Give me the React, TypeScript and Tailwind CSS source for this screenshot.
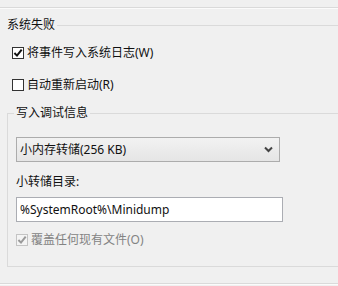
import React from 'react';

const font = { fontFamily: '"Noto Sans", "Noto Sans CJK SC", sans-serif' };

function CheckBox({ checked, disabled }: { checked?: boolean; disabled?: boolean }) {
    return (
        <span
            className={`flex h-[12px] w-[12px] shrink-0 items-center justify-center border ${
                disabled ? 'border-[#c4c4c4] bg-[#f4f4f4]' : 'border-[#333333] bg-white'
            }`}
        >
            {checked && (
                <svg width="10" height="10" viewBox="0 0 10 10">
                    <path
                        d="M1.4 5 L4 7.6 L8.7 1.6"
                        fill="none"
                        stroke={disabled ? '#9a9a9a' : '#111111'}
                        strokeWidth="2"
                    />
                </svg>
            )}
        </span>
    );
}

export default function App() {
    return (
        <div className="h-[286px] w-[338px] overflow-hidden bg-[#f0f0f0] text-[12px] leading-4 text-[#111111]" style={font}>
            <div className="h-[7px]" />
            <div className="h-[2px] border-t border-[#dadada] bg-white/70" />

            {/* 系统失败 */}
            <div className="mt-[8px] flex h-4 items-center pl-[7px]">
                <span className="pr-[2px]">系统失败</span>
                <div className="h-[1px] flex-1 bg-[#dadada]" />
            </div>

            <div className="mt-[12px] flex h-4 items-center gap-[3px] pl-[12px]">
                <CheckBox checked />
                <span>将事件写入系统日志(W)</span>
            </div>

            <div className="mt-[16px] flex h-4 items-center gap-[3px] pl-[12px]">
                <CheckBox />
                <span>自动重新启动(R)</span>
            </div>

            {/* 写入调试信息 */}
            <div className="ml-[7px] mt-[12px] w-[360px]">
                <div className="flex h-4">
                    <div className="h-2 w-[7px] self-end border-l border-t border-[#dadada]" />
                    <span className="px-[2px]">写入调试信息</span>
                    <div className="h-2 flex-1 self-end border-t border-[#dadada]" />
                </div>
                <div className="border-b border-l border-[#dadada] pb-[18px] pl-[8px] pt-[16px]">
                    <div className="flex h-[25px] w-[264px] items-center justify-between border border-[#acacac] bg-gradient-to-b from-[#f2f2f2] to-[#e5e5e5] pl-[3px] pr-[6px]">
                        <span>小内存转储(256 KB)</span>
                        <svg width="9" height="7" viewBox="0 0 9 7">
                            <path d="M1 1.5 L4.5 5 L8 1.5" fill="none" stroke="#444444" strokeWidth="2" />
                        </svg>
                    </div>

                    <div className="mt-[12px] h-4">小转储目录:</div>

                    <div className="mt-[7px] flex h-[25px] w-[267px] items-center border border-[#abadb3] bg-white pl-[3px]">
                        %SystemRoot%\Minidump
                    </div>

                    <div className="mt-[10px] flex h-4 items-center gap-[3px]">
                        <CheckBox checked disabled />
                        <span className="text-[#838383]">覆盖任何现有文件(O)</span>
                    </div>
                </div>
            </div>

            <div className="mt-[16px] h-[2px] border-t border-[#dadada] bg-white/70" />
        </div>
    );
}
